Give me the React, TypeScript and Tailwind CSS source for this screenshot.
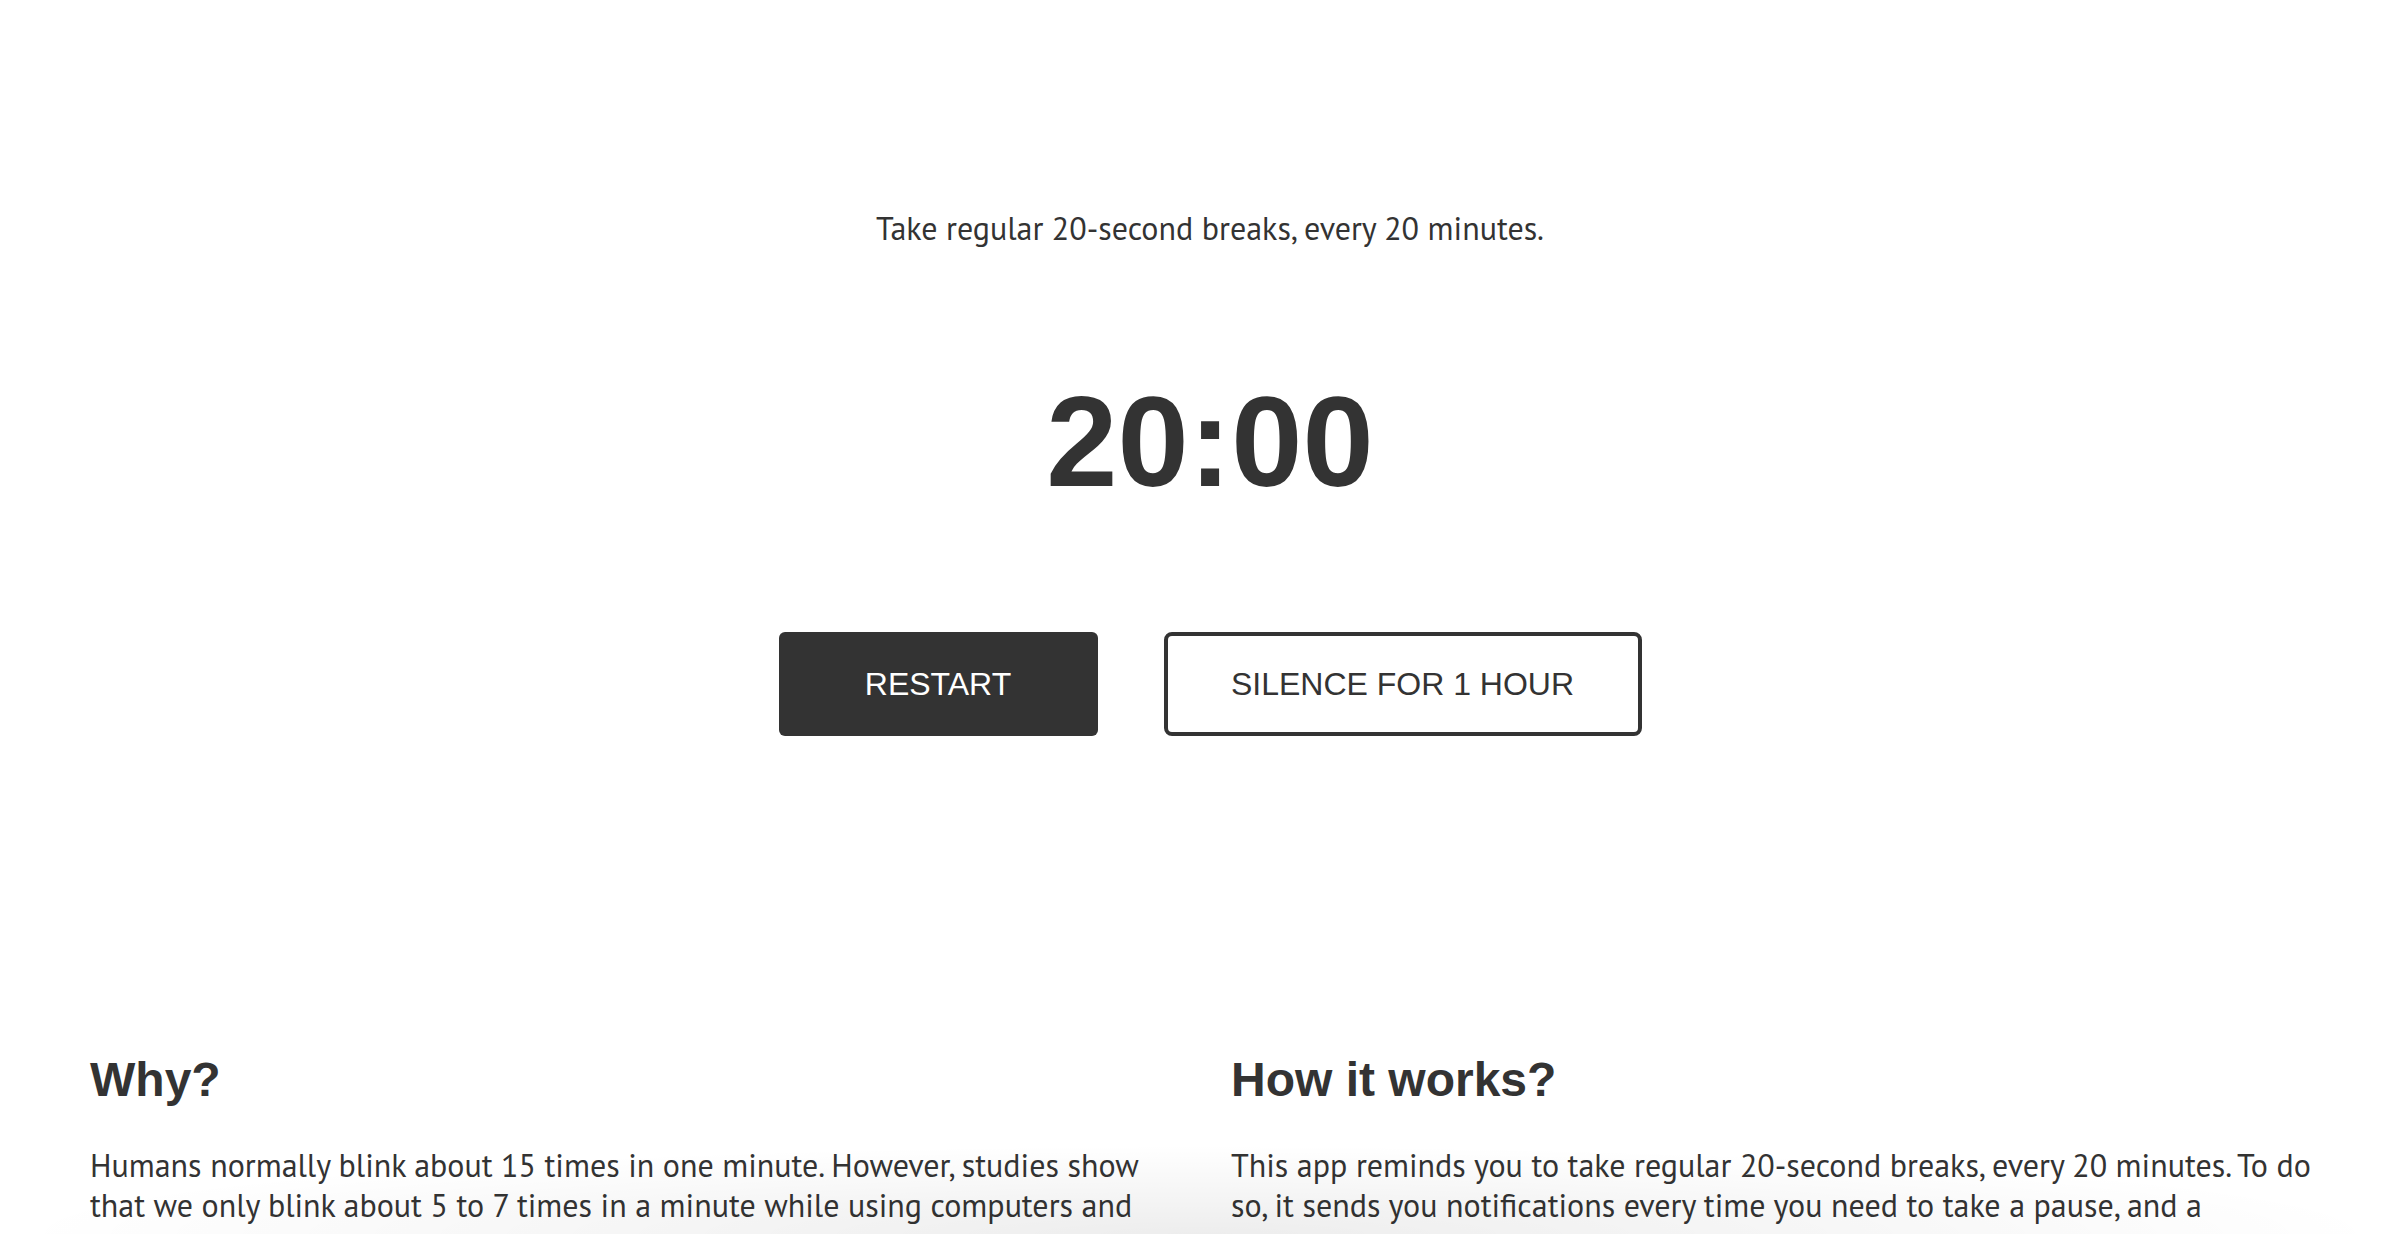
import React from "react";

export default function App() {
  return (
    <div className="relative h-[1234px] overflow-hidden bg-white text-[#333]">
      <main className="flex flex-col items-center pl-[90px] pr-[70px]">
        <p className="mt-[208px] font-['PT_Sans',Lato,'Noto_Sans',sans-serif] text-[32px] leading-[40px]">
          Take regular 20-second breaks, every 20 minutes.
        </p>
        <div className="mt-[130px] font-['Liberation_Sans',Arial,Helvetica,sans-serif] text-[128px] font-bold leading-none">
          20:00
        </div>
        <div className="mt-[126px] flex gap-[66px] font-['Liberation_Sans',Arial,Helvetica,sans-serif]">
          <button className="flex h-[104px] w-[319px] items-center justify-center rounded-[6px] bg-[#333] text-[32px] text-white">
            RESTART
          </button>
          <button className="flex h-[104px] w-[478px] items-center justify-center rounded-[8px] border-4 border-[#333] bg-white text-[32px] text-[#333]">
            SILENCE FOR 1 HOUR
          </button>
        </div>
        <section className="mt-[320px] grid w-full grid-cols-2 gap-[42px]">
          <div>
            <h2 className="font-['Liberation_Sans',Arial,Helvetica,sans-serif] text-[48px] font-bold leading-none">
              Why?
            </h2>
            <p className="mt-[41px] max-w-[1075px] font-['PT_Sans',Lato,'Noto_Sans',sans-serif] text-[32px] leading-[40px]">
              Humans normally blink about 15 times in one minute. However, studies show
              that we only blink about 5 to 7 times in a minute while using computers and
              other digital screens. Blinking less often can make your eyes feel dry,
              tired and irritated.
            </p>
          </div>
          <div>
            <h2 className="font-['Liberation_Sans',Arial,Helvetica,sans-serif] text-[48px] font-bold leading-none">
              How it works?
            </h2>
            <p className="mt-[41px] max-w-[1095px] font-['PT_Sans',Lato,'Noto_Sans',sans-serif] text-[32px] leading-[40px]">
              This app reminds you to take regular 20-second breaks, every 20 minutes. To do
              so, it sends you notifications every time you need to take a pause, and a
              notification when the 20 seconds are over.
            </p>
          </div>
        </section>
      </main>
      <div className="pointer-events-none absolute inset-x-0 bottom-0 h-[90px] bg-[radial-gradient(ellipse_at_bottom,rgba(0,0,0,0.07),rgba(0,0,0,0)_70%)]" />
    </div>
  );
}
